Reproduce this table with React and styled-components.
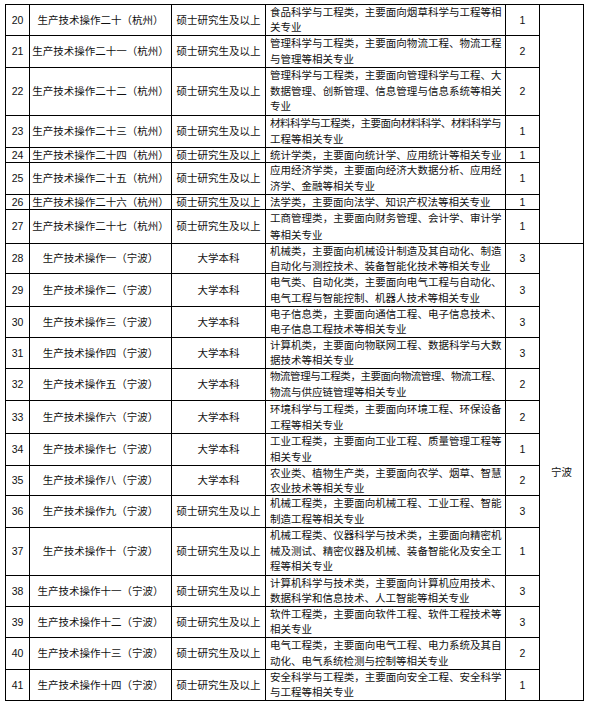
import React from "react";
import styled, { createGlobalStyle } from "styled-components";

const hz = [
  ["20", "二十", "1", 31, ["食品科学与工程类，主要面向烟草科学与工程等相", "关专业"]],
  ["21", "二十一", "2", 32, ["管理科学与工程类，主要面向物流工程、物流工程", "与管理等相关专业"]],
  ["22", "二十二", "2", 48, ["管理科学与工程类，主要面向管理科学与工程、大", "数据管理、创新管理、信息管理与信息系统等相关", "专业"]],
  ["23", "二十三", "1", 32, ["材料科学与工程类，主要面向材料科学、材料科学与", "工程等相关专业"]],
  ["24", "二十四", "1", 15, ["统计学类，主要面向统计学、应用统计等相关专业"]],
  ["25", "二十五", "1", 32, ["应用经济学类，主要面向经济大数据分析、应用经", "济学、金融等相关专业"]],
  ["26", "二十六", "1", 15, ["法学类，主要面向法学、知识产权法等相关专业"]],
  ["27", "二十七", "1", 34, ["工商管理类，主要面向财务管理、会计学、审计学", "等相关专业"]],
];

const nb = [
  ["28", "一", "大学本科", "3", 30, ["机械类，主要面向机械设计制造及其自动化、制造", "自动化与测控技术、装备智能化技术等相关专业"]],
  ["29", "二", "大学本科", "3", 33, ["电气类、自动化类，主要面向电气工程与自动化、", "电气工程与智能控制、机器人技术等相关专业"]],
  ["30", "三", "大学本科", "3", 31, ["电子信息类，主要面向通信工程、电子信息技术、", "电子信息工程技术等相关专业"]],
  ["31", "四", "大学本科", "3", 31, ["计算机类，主要面向物联网工程、数据科学与大数", "据技术等相关专业"]],
  ["32", "五", "大学本科", "2", 32, ["物流管理与工程类，主要面向物流管理、物流工程、", "物流与供应链管理等相关专业"]],
  ["33", "六", "大学本科", "2", 33, ["环境科学与工程类，主要面向环境工程、环保设备", "工程等相关专业"]],
  ["34", "七", "大学本科", "1", 32, ["工业工程类，主要面向工业工程、质量管理工程等", "相关专业"]],
  ["35", "八", "大学本科", "2", 30, ["农业类、植物生产类，主要面向农学、烟草、智慧", "农业技术等相关专业"]],
  ["36", "九", "硕士研究生及以上", "3", 32, ["机械工程类，主要面向机械工程、工业工程、智能", "制造工程等相关专业"]],
  ["37", "十", "硕士研究生及以上", "1", 48, ["机械工程类、仪器科学与技术类，主要面向精密机", "械及测试、精密仪器及机械、装备智能化及安全工", "程等相关专业"]],
  ["38", "十一", "硕士研究生及以上", "3", 31, ["计算机科学与技术类，主要面向计算机应用技术、", "数据科学和信息技术、人工智能等相关专业"]],
  ["39", "十二", "硕士研究生及以上", "3", 31, ["软件工程类，主要面向软件工程、软件工程技术等", "相关专业"]],
  ["40", "十三", "硕士研究生及以上", "2", 32, ["电气工程类，主要面向电气工程、电力系统及其自", "动化、电气系统检测与控制等相关专业"]],
  ["41", "十四", "硕士研究生及以上", "1", 31, ["安全科学与工程类，主要面向安全工程、安全科学", "与工程等相关专业"]],
];

const widths = [24, 142, 94, 240, 34, 44];

function Desc({ lines }) {
  return (
    <DescCell>
      {lines.map((l, i) => (
        <Line key={i} $full={i < lines.length - 1 || l.length >= 22}>
          {l}
        </Line>
      ))}
    </DescCell>
  );
}

export default function App() {
  const rows = [
    ...hz.map(([no, n, cnt, h, lines]) => ({
      no, name: `生产技术操作${n}（杭州）`, edu: "硕士研究生及以上", cnt, h, lines,
    })),
    ...nb.map(([no, n, edu, cnt, h, lines]) => ({
      no, name: `生产技术操作${n}（宁波）`, edu, cnt, h, lines,
    })),
  ];

  return (
    <>
      <GlobalStyle />
      <Page>
        <Table>
          <colgroup>
            {widths.map((w, i) => (
              <Col key={i} $w={w} />
            ))}
          </colgroup>
          <tbody>
            {rows.map((r, i) => (
              <Row key={r.no} $h={r.h} $n={r.lines.length}>
                <Cell>{r.no}</Cell>
                <Cell>{r.name}</Cell>
                <Cell>{r.edu}</Cell>
                <Desc lines={r.lines} />
                <Cell>{r.cnt}</Cell>
                {i === 0 && <Cell rowSpan={8} />}
                {i === 8 && <Cell rowSpan={14}>宁波</Cell>}
              </Row>
            ))}
          </tbody>
        </Table>
      </Page>
    </>
  );
}

const GlobalStyle = createGlobalStyle`
  body {
    margin: 0;
    background: #ffffff;
    color: #111111;
    font-family: "Liberation Sans", "Noto Sans CJK SC", sans-serif;
  }
`;

const Page = styled.div`
  padding: 4px 0 0 5px;
`;

const Table = styled.table`
  border-collapse: collapse;
  table-layout: fixed;
  width: 579px;
  font-size: 10.5px;
`;

const Col = styled.col`
  width: ${(p) => p.$w}px;
`;

const Row = styled.tr`
  height: ${(p) => p.$h}px;
  line-height: ${(p) => (p.$h - 1) / p.$n}px;
`;

const Cell = styled.td`
  border: 1px solid #000000;
  padding: 0;
  text-align: center;
  vertical-align: middle;
  white-space: nowrap;
  overflow: hidden;
`;

const DescCell = styled(Cell)`
  text-align: left;
  padding: 0 4px 0 4px;
`;

const Line = styled.div`
  ${(p) =>
    p.$full &&
    `
    text-align: justify;
    text-align-last: justify;
    letter-spacing: -0.6px;
  `}
`;
